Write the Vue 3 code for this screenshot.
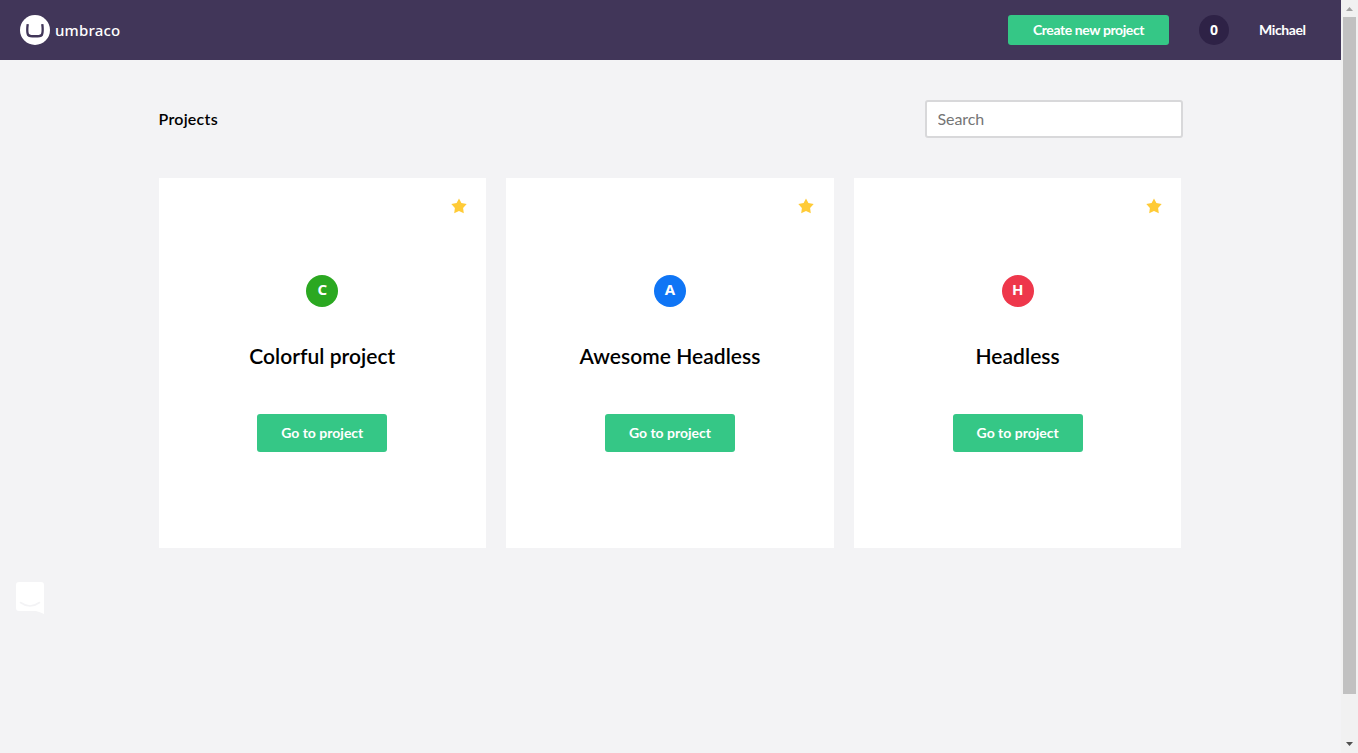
<script setup>
const projects = [
  { name: 'Colorful project', initial: 'C', tone: 'green' },
  { name: 'Awesome Headless', initial: 'A', tone: 'blue' },
  { name: 'Headless', initial: 'H', tone: 'red' },
]
</script>

<template>
  <div class="window">
    <div class="page">
      <header class="topbar">
        <a class="brand">
          <svg class="mark" width="30" height="30" viewBox="0 0 30 30">
            <circle cx="15" cy="15" r="15" fill="#fff" />
            <path d="M6.6 9L8.9 9.3C8.3 13 8.2 17.5 9.1 18.9C10 19.9 12 20 15 20S20 19.9 20.9 18.9C21.8 17.5 21.7 13 21.1 9.3L23.4 9C24.1 13 24.1 18.7 22.8 20.7C21.5 22.5 19 22.6 15 22.6S8.5 22.5 7.2 20.7C5.9 18.7 5.9 13 6.6 9Z" fill="#413659" />
          </svg>
          <span class="wordmark">umbraco</span>
        </a>
        <button class="create">Create new project</button>
        <span class="count">0</span>
        <span class="user">Michael</span>
      </header>

      <main class="content">
        <div class="heading">
          <h1>Projects</h1>
          <input class="search" type="text" placeholder="Search" />
        </div>
        <div class="grid">
          <article v-for="p in projects" :key="p.name" class="card">
            <svg class="star" width="16" height="16" viewBox="0 0 16 16">
              <path d="M8 .4L10.4 5.1L15.7 6L12.1 9.9L12.8 15.2L8 13L3.2 15.2L3.9 9.9L.3 6L5.6 5.1Z" fill="#ffcb37" />
            </svg>
            <span class="avatar" :class="p.tone">{{ p.initial }}</span>
            <h2>{{ p.name }}</h2>
            <button class="go">Go to project</button>
          </article>
        </div>
      </main>

      <svg class="chat" width="28" height="32" viewBox="0 0 28 32">
        <path d="M3 0H25Q28 0 28 3V32Q24 30 20 29H3Q0 29 0 26V3Q0 0 3 0Z" fill="#fff" />
        <path d="M4.5 20.5Q14 27.5 23.5 20.5" fill="none" stroke="#f3f3f5" stroke-width="1.6" stroke-linecap="round" />
      </svg>
    </div>

    <aside class="scrollbar">
      <svg width="17" height="17" viewBox="0 0 17 17"><path d="M5 11L8.5 7L12 11Z" fill="#a3a3a3" /></svg>
      <div class="thumb"></div>
      <svg width="17" height="17" viewBox="0 0 17 17"><path d="M5 6L8.5 10L12 6Z" fill="#505050" /></svg>
    </aside>
  </div>
</template>

<style>
body { margin: 0; overflow: hidden; }
</style>

<style scoped>
* { box-sizing: border-box; }
.window { display: flex; width: 1358px; height: 753px; font-family: Lato, sans-serif; color: #000; background: #f3f3f5; }
.page { position: relative; width: 1341px; height: 753px; }
.topbar { display: flex; align-items: center; height: 60px; padding: 0 35px 0 20px; background: #413659; color: #fff; }
.brand { display: flex; align-items: center; margin-right: auto; }
.mark { display: block; }
.wordmark { margin: -1px 0 0 5px; font: 500 15px/20px "Noto Sans", sans-serif; letter-spacing: .2px; }
button { border: 0; padding: 0; border-radius: 3px; background: #35c786; color: #fff; font: 700 14px/20px Lato, sans-serif; }
.create { width: 161px; height: 30px; letter-spacing: -.4px; }
.count { width: 30px; height: 30px; margin: 0 30px; border-radius: 50%; background: #2e2246; text-align: center; font: 700 14px/30px "Open Sans", sans-serif; }
.user { width: 47px; font-size: 14px; font-weight: 700; line-height: 20px; letter-spacing: -.4px; white-space: nowrap; }
.content { width: 1024px; margin: 40px 0 0 158.5px; }
.heading { display: flex; align-items: center; justify-content: space-between; height: 38px; }
h1 { margin: 0; font-size: 16px; font-weight: 600; line-height: 20px; letter-spacing: .25px; }
.search { width: 258px; height: 38px; margin: 0; padding: 0 11px 2px; border: 2px solid #d8d8da; border-radius: 3px; background: #fff; font: 400 16px/20px Lato, sans-serif; letter-spacing: -.1px; outline: 0; }
.search::placeholder { color: #757575; opacity: 1; }
.grid { display: grid; grid-template-columns: repeat(3, 327.5px); gap: 20.2px; margin-top: 40px; }
.card { position: relative; display: flex; flex-direction: column; align-items: center; height: 370px; padding-top: 97px; background: #fff; }
.star { position: absolute; top: 20px; right: 19.5px; }
.avatar { width: 32px; height: 32px; border-radius: 50%; color: #fff; text-align: center; font: 700 15px/29px "Noto Sans", sans-serif; }
.green { background: #2ba821; }
.blue { background: #0f75f5; }
.red { background: #ee374b; }
h2 { margin: 36px 0 0; font-size: 21px; font-weight: 600; line-height: 26px; letter-spacing: .04px; }
.go { width: 130px; height: 38px; margin-top: 45px; }
.chat { position: absolute; left: 16px; top: 582px; }
.scrollbar { display: flex; flex-direction: column; width: 17px; height: 753px; background: #f1f1f1; }
.scrollbar svg { display: block; }
.scrollbar svg:last-child { margin-top: auto; }
.thumb { width: 13px; height: 677px; margin-left: 2px; background: #c1c1c1; }
</style>
